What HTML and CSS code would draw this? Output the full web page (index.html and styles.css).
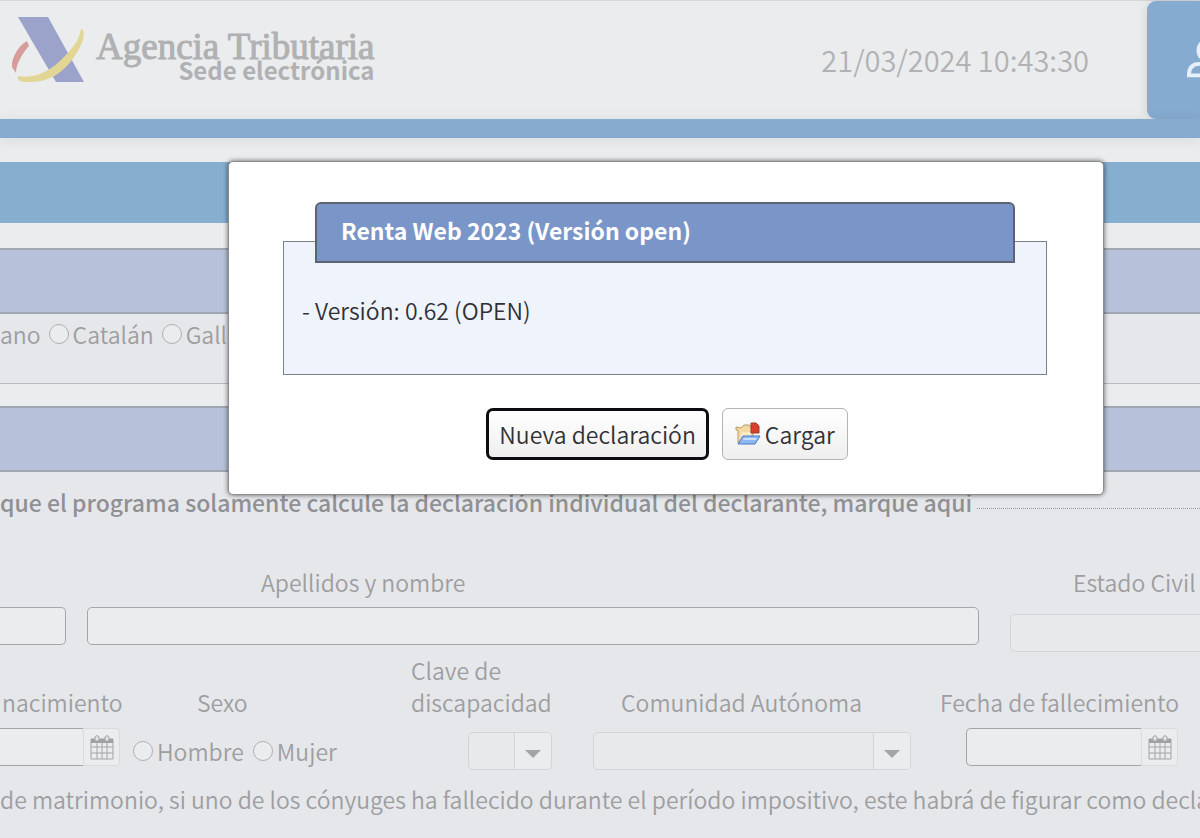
FILE: index.html
```html
<!DOCTYPE html>
<html lang="es">
<head>
<meta charset="utf-8">
<title>Renta Web 2023</title>
<link rel="stylesheet" href="styles.css">
</head>
<body>
<header class="header">
  <div class="brand">
    <svg class="brand-mark" viewBox="0 0 74 68" aria-hidden="true">
      <path fill="#9ba3cb" d="M7 1h30l36 65H45z"/>
      <path fill="#d79b9c" d="M16 25C8 29 0 42 1 51l4 6c0-9 6-19 13-27z"/>
      <path fill="#e2d695" d="M72 14q2 7-2 15C62 46 46 67 18 66q-7 0-9-1-3-2-2-5 9 2 19-1 14-5 24-15C61 33 68 25 70 13z"/>
    </svg>
    <div class="brand-text">
      <span class="brand-name">Agencia Tributaria</span>
      <span class="brand-sub">Sede electrónica</span>
    </div>
  </div>
  <time class="clock">21/03/2024 10:43:30</time>
  <button class="user" type="button" aria-label="Usuario">
    <svg viewBox="0 0 48 48" aria-hidden="true"><circle cx="24" cy="14" r="11"/><path d="M3 40c0-8 4-12 11-12h20c7 0 11 4 11 12z"/></svg>
  </button>
</header>
<div class="strip"></div>
<main>
  <div class="banner"></div>
  <section class="panel">
    <div class="panel-head"></div>
    <div class="panel-body languages">
      <span>ano</span>
      <label class="radio"><input type="radio" name="idioma">Catalán</label>
      <label class="radio"><input type="radio" name="idioma">Gallego</label>
    </div>
  </section>
  <section class="panel panel-last">
    <div class="panel-head"></div>
    <div class="panel-body">
      <div class="notice"><strong>que el programa solamente calcule la declaración individual del declarante, marque aquí</strong></div>
      <div class="row row-name">
        <div class="field field-nif"><input class="box" type="text" aria-label="NIF"></div>
        <div class="field field-name"><label for="nombre">Apellidos y nombre</label><input class="box" id="nombre" type="text"></div>
        <div class="field field-civil"><label for="civil">Estado Civil</label><select class="box soft" id="civil"></select></div>
      </div>
      <div class="row row-data">
        <div class="field">
          <label class="cut" for="nacimiento">nacimiento</label>
          <div class="date date-cut"><input class="box" id="nacimiento" type="text"><button class="cal" type="button" aria-label="Calendario"><svg viewBox="0 0 24 26" aria-hidden="true"><path class="cal-grid" d="M1 5h22v20H1zM1 13h22M1 19h22M7 9v16M12 9v16M17 9v16"/><path class="cal-top" d="M1 5h22v4H1z"/><path class="cal-ring" d="M5 7V3q2-3 4 0v4zM15 7V3q2-3 4 0v4z"/></svg></button></div>
        </div>
        <div class="field field-sex">
          <span class="sex-title">Sexo</span>
          <div class="radios">
            <label class="radio"><input type="radio" name="sexo">Hombre</label>
            <label class="radio"><input type="radio" name="sexo">Mujer</label>
          </div>
        </div>
        <div class="field field-key">
          <label for="clave">Clave de discapacidad</label>
          <div class="combo combo-small"><select class="box soft" id="clave"></select><span class="arrow"></span></div>
        </div>
        <div class="field field-region">
          <label for="comunidad">Comunidad Autónoma</label>
          <div class="combo"><select class="box soft" id="comunidad"></select><span class="arrow"></span></div>
        </div>
        <div class="field field-death">
          <label for="fallecimiento">Fecha de fallecimiento</label>
          <div class="date"><input class="box" id="fallecimiento" type="text"><button class="cal" type="button" aria-label="Calendario"><svg viewBox="0 0 24 26" aria-hidden="true"><path class="cal-grid" d="M1 5h22v20H1zM1 13h22M1 19h22M7 9v16M12 9v16M17 9v16"/><path class="cal-top" d="M1 5h22v4H1z"/><path class="cal-ring" d="M5 7V3q2-3 4 0v4zM15 7V3q2-3 4 0v4z"/></svg></button></div>
        </div>
      </div>
      <p class="help">de matrimonio, si uno de los cónyuges ha fallecido durante el período impositivo, este habrá de figurar como decla</p>
    </div>
  </section>
</main>
<div class="dialog" role="dialog" aria-labelledby="dialog-title">
  <section class="info">
    <h2 class="info-title" id="dialog-title">Renta Web 2023 (Versión open)</h2>
    <p class="info-text">- Versión: 0.62 (OPEN)</p>
  </section>
  <div class="actions">
    <button class="btn btn-focus" type="button">Nueva declaración</button>
    <button class="btn" type="button">
      <svg viewBox="0 0 26 24" aria-hidden="true">
        <path fill="#f3d9a4" stroke="#b99a66" d="M3 21V8H1V5l5 1 3-3h5l4 5v10z"/>
        <path fill="#fbecc8" d="M5 18l2-8h9v8z"/>
        <path fill="#d8402c" stroke="#a03a2c" d="M16 1h5l3 3v7h-8z"/>
        <path fill="#8db8f4" stroke="#4a78c8" d="M8 14h17l-5 8H3z"/>
        <path fill="#c8dffb" d="M9 16h13l-1 2H8z"/>
      </svg>Cargar
    </button>
  </div>
</div>
</body>
</html>
```
FILE: styles.css
```css
* { box-sizing: border-box; }

body {
  margin: 0;
  min-height: 100vh;
  display: flex;
  flex-direction: column;
  position: relative;
  overflow: hidden;
  background: #ebecee;
  color: #9d9ea1;
  font: 350 23px/32px "Noto Sans CJK SC", "Noto Sans", sans-serif;
}

input, select, button { font: inherit; color: inherit; margin: 0; }

.header {
  display: flex;
  align-items: center;
  height: 119px;
  border-top: 1px solid #d6d7d9;
  background: #ebecee;
}
.brand { display: flex; flex: 1; gap: 11px; padding-left: 11px; margin-bottom: 20px; }
.brand-mark { width: 74px; height: 68px; }
.brand-text { display: flex; flex-direction: column; align-items: flex-end; padding-top: 16px; }
.brand-name { color: #b0b1b3; font: 37px/30px "Liberation Serif", serif; -webkit-text-stroke: 1px #b0b1b3; }
.brand-sub { color: #b0b1b3; font-weight: 700; font-size: 24px; line-height: 16px; }
.clock { font-size: 29px; color: #b1b2b4; margin: 0 58px 3px 0; }
.user {
  align-self: stretch;
  width: 53px;
  padding: 0 0 0 39px;
  border: 0;
  border-radius: 9px 0 0 9px;
  overflow: hidden;
  background: #86abd0;
  box-shadow: 0 0 12px rgba(0, 0, 0, .12);
}
.user svg { display: block; width: 46px; height: 46px; fill: none; stroke: #e6f0fa; stroke-width: 4; }

.strip { height: 19px; background: #86abce; margin-bottom: 24px; box-shadow: 0 2px 14px rgba(0, 0, 0, .08); }
main { display: flex; flex-direction: column; flex: 1; }
.banner { height: 61px; background: #85aecf; margin-bottom: 25px; }

.panel { margin-bottom: 22px; border-bottom: 1px solid #b9babd; background: #e6e7ea; }
.panel-last { flex: 1; margin: 0; border: 0; }
.panel-head {
  height: 66px;
  border: solid #a0a6b2;
  border-width: 2px 0;
  background: #b7c2da;
}
.languages { display: flex; gap: 8px; height: 69px; padding-top: 4px; }
.radio { display: flex; align-items: center; gap: 4px; }
.languages .radio, .languages span { height: 32px; }
.radio input {
  appearance: none;
  width: 20px;
  height: 20px;
  border: 1px solid #aeafb1;
  border-radius: 50%;
  background: #ebecee;
}

.notice { display: flex; gap: 5px; padding-top: 14px; white-space: nowrap; color: #8f9093; }
.notice strong { font-weight: 500; }
.notice::after { content: ""; flex: 1; height: 22px; border-bottom: 1px dotted #98999c; }

.row { display: grid; align-items: end; }
.field { display: flex; flex-direction: column; }
.box {
  width: 100%;
  height: 38px;
  border: 1px solid #a5a6a9;
  border-radius: 5px;
  background: #ebecee;
  appearance: none;
}
.soft { border-color: #d3d4d7; background: #e8e9eb; }

.row-name { grid-template-columns: 66px minmax(0, 1fr) 190px; align-items: start; padding-top: 48px; }
.field-nif { padding-top: 41px; }
.field-nif .box { border-left: 0; border-radius: 0 5px 5px 0; }
.field-name { padding: 0 31px 0 21px; gap: 9px; }
.field-name label { padding-left: 174px; }
.field-civil { gap: 16px; }
.field-civil label { padding-left: 63px; }
.field-civil .box { border-right: 0; border-radius: 5px 0 0 5px; }

.row-data { grid-template-columns: 133px 278px 182px minmax(0, 1fr) 260px; padding-top: 2px; }
.row-data .field { gap: 10px; }
.cut { padding-left: 2px; }
.date { display: flex; width: 212px; }
.date .box { flex: 1; min-width: 0; border-right: 0; border-radius: 5px 0 0 5px; }
.date-cut { width: 120px; }
.date-cut .box { border-left: 0; border-radius: 0; }
.cal {
  display: grid;
  place-items: center;
  width: 37px;
  height: 38px;
  padding: 0;
  border: 1px solid #dadbdd;
  border-radius: 0 4px 4px 0;
  background: #ebecee;
}
.cal svg { width: 24px; height: 26px; }
.cal-grid { fill: none; stroke: #a3a4a6; stroke-width: 1; }
.cal-top { fill: #a0a1a3; }
.cal-ring { fill: #e4e5e7; stroke: #a0a1a3; }
.sex-title { padding-left: 64px; }
.radios { display: flex; gap: 9px; height: 38px; padding-top: 8px; }
.field-key label { width: 150px; }
.row-data .field-key, .row-data .field-region { margin-bottom: -4px; gap: 14px; }
.combo { position: relative; width: 318px; }
.combo-small { width: 84px; margin-left: 57px; }
.combo select { display: block; }
.arrow {
  position: absolute;
  inset: 1px 1px 1px auto;
  width: 37px;
  display: grid;
  place-items: center;
  border-left: 1px solid #d3d4d7;
  border-radius: 0 4px 4px 0;
  background: #ebecee;
  pointer-events: none;
}
.arrow::before {
  content: "";
  margin-top: 6px;
  border: 8px solid transparent;
  border-top-color: #a3a4a6;
  border-bottom: 0;
}
.field-region label { padding-left: 28px; }
.field-death .date { margin-left: 26px; }
.help { margin: 17px 0 0; white-space: nowrap; }

.dialog {
  position: absolute;
  top: 161px;
  left: 19%;
  width: 73%;
  padding: 79px 56px 34px 54px;
  border: 1px solid #8d8e90;
  border-radius: 5px;
  background: #fff;
  color: #303134;
  box-shadow: 0 0 5px rgba(0, 0, 0, .6);
}
.info {
  padding: 0 18px 48px;
  border: 1px solid #7d818a;
  background: #eff3fb;
}
.info-title {
  margin: -40px 13px 31px;
  padding: 10px 24px 15px;
  border: 2px solid #5d6370;
  border-radius: 6px 6px 0 0;
  background: #7a95c8;
  color: #fff;
  font-size: 23px;
  font-weight: 700;
}
.info-text { margin: 0; }
.actions { display: flex; justify-content: center; align-items: center; gap: 13px; margin-top: 33px; padding-left: 4px; }
.btn {
  display: flex;
  align-items: center;
  gap: 4px;
  padding: 9px 12px;
  border: 1px solid #b4b4b6;
  border-radius: 6px;
  background: linear-gradient(#fff, #efeff0);
}
.btn-focus { border: 3px solid #0c0d10; padding: 7px 10px; border-radius: 7px; }
.btn svg { width: 26px; height: 24px; }
```
